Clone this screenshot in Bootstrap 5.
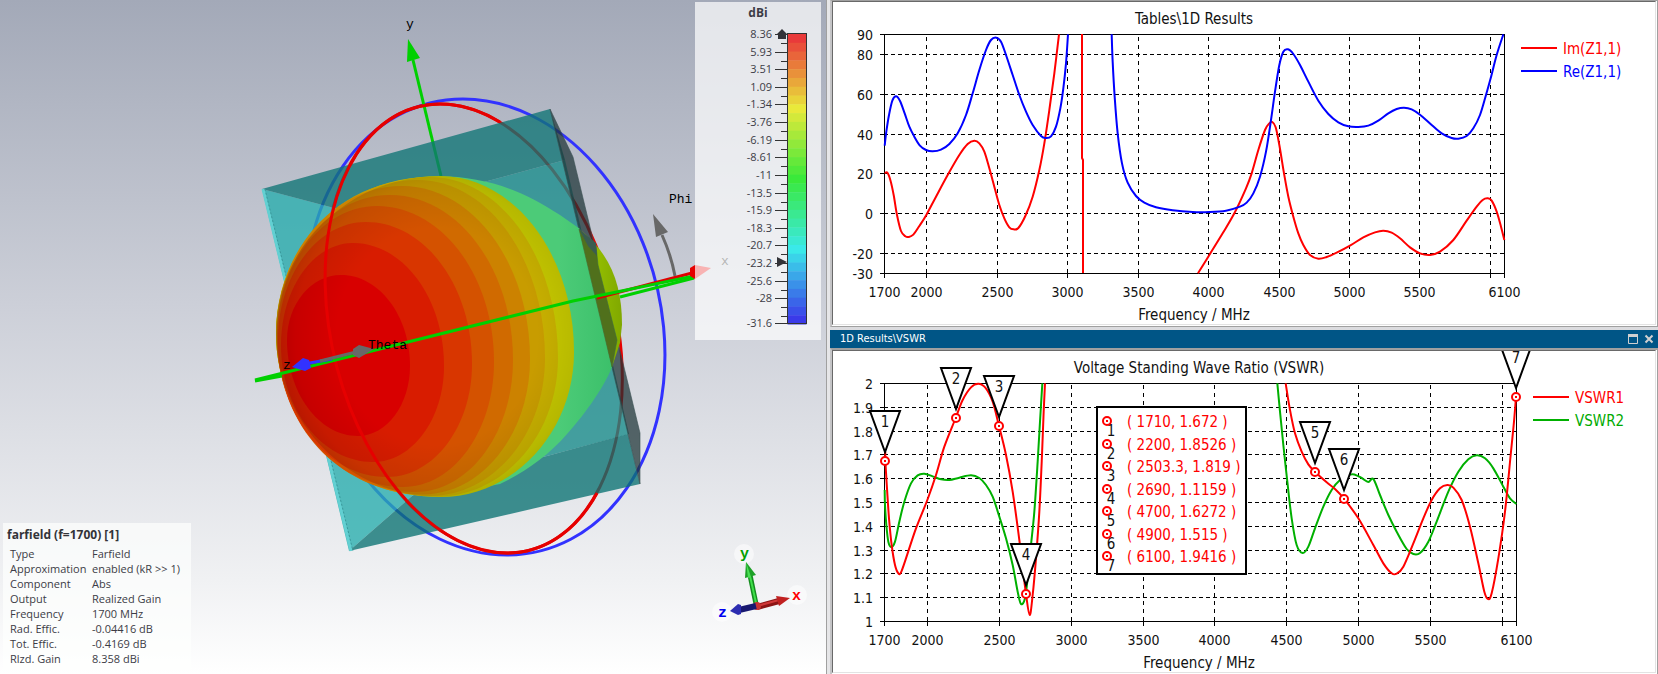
<!DOCTYPE html>
<html lang="en">
<head>
<meta charset="utf-8">
<meta name="viewport" content="width=device-width, initial-scale=1">
<title>Farfield and 1D Results</title>
<link href="https://cdn.jsdelivr.net/npm/bootstrap@5.3.0/dist/css/bootstrap.min.css" rel="stylesheet">
<style>
body{font-family:"Open Sans","Noto Sans",sans-serif;background:#dcdcdf;color:#3c3c46}
.view3d{flex:826 1 0;min-width:0;background:linear-gradient(#a3a9b8,#cccfd8 45%,#f0f1f3 86%,#fff)}
.results{flex:832 1 0;min-width:0}
.splitter{width:4px;background:#e6e6e8;border-left:1px solid #a0a0a0}
.pane{background:#fff;border-top:1px solid #a0a0a0;border-left:2px solid #c4c4c6;border-right:1px solid #a0a0a0;padding-right:1px;min-height:0}
.pane-top{flex:327 1 0;border-bottom:1px solid #a0a0a0;padding-bottom:1px}
.pane-bottom{flex:326 1 0;border-top:2px solid #a0a0a0;padding-bottom:1px}
.plot{border:1px solid #696969;border-right-color:#e3e3e3;border-bottom-color:#e3e3e3;min-height:0}
.titlebar{height:18px;margin-top:3px;padding:0 3px 0 10px;background:#005586;color:#fff;font:11px/18px "DejaVu Sans Condensed","DejaVu Sans",sans-serif}
.titlebar button{width:12px;height:18px;padding:0;border:0;background:none;line-height:0}
.fill{display:block;width:100%;height:100%}
.ramp{top:2px;right:5px;width:126px;height:338px;background:rgba(255,255,255,.7)}
.info{left:3px;bottom:4px;width:188px;padding:4px;background:rgba(253,255,253,.7)}
.info table{width:100%;color:#3c3c46;font-size:11px;line-height:15px}
.info caption{caption-side:top;padding:0 0 3px;color:#333338;font-size:12px;font-weight:700;line-height:16px}
.info th{width:85px;padding:0 0 0 3px;font-weight:400}
.info td{padding:0}
.plot text{font:15px "DejaVu Sans Condensed","DejaVu Sans",sans-serif;fill:#111}
.plot text.tick{font-size:14px}
.ramp text{font:11px "Open Sans","Noto Sans",sans-serif;fill:#3c3c46}
.ramp text.unit{font-size:12px;font-weight:700}
.scene text{font:13px "Liberation Mono",monospace}
.scene .triad text{font-size:15px;font-weight:700}
.plot .red{fill:#f00}.plot .blue{fill:#00f}.plot .green{fill:#00aa00}
</style>
</head>
<body>
<div class="d-flex vh-100 overflow-hidden">
<main class="view3d position-relative">
<svg class="fill scene" viewBox="0 0 826 674" role="img" aria-label="Farfield pattern">
<defs>
<radialGradient id="shade" cx=".54" cy=".5" r=".56"><stop offset=".6" stop-opacity="0"/><stop offset=".85" stop-opacity=".08"/><stop offset="1" stop-opacity=".2"/></radialGradient>
<linearGradient id="grn" x2="1" y2="0"><stop offset=".7" stop-color="#4ccb78"/><stop offset="1" stop-color="#3cc06a"/></linearGradient>
<linearGradient id="lobe" x2="1" y2="0"><stop offset=".5" stop-color="#90ba00"/><stop offset="1" stop-color="#80a800"/></linearGradient>
</defs>
<g fill="none" stroke-width="3">
<path d="M-1 0A1 1 0 1 1 1 0A1 1 0 1 1-1 0" transform="matrix(178.6 0 22 228 485 327)" vector-effect="non-scaling-stroke" stroke="#3232ff"/>
<path d="M-1 0A1 1 0 1 1 1 0A1 1 0 1 1-1 0" transform="matrix(145 0 33.5 224.5 473.5 328.5)" vector-effect="non-scaling-stroke" stroke="#e60000"/>
<path d="M441 176L413 60" stroke="#00d000"/>
</g>
<path d="M408 39L407 62L420 58Z" fill="#00d000"/>
<g fill-opacity=".78">
<path fill="#178c8b" d="M484 182L565 160L629 434L547 456L440 480V194Z"/>
<path fill="#26adad" d="M262 189L334 208L440 215L440 480L412 496L349 551Z"/>
<path fill="#107474" d="M262 189L550 109L565 160L484 182L440 194L440 215L334 208Z"/>
<path fill="#0a7272" d="M349 551L412 496L440 480L547 456L628 434L640 484Z"/>
</g>
<path d="M263 189L351 551" stroke="#62d0d2" stroke-width="3"/>
<path d="M263 189L351 551" stroke="#3a9a9c" stroke-dasharray="2 2" transform="translate(2 0)"/>
<path fill="#1c3234" fill-opacity=".72" stroke="#3a5052" stroke-opacity=".6" d="M550 109L573 157L640 433L640 484Z"/>
<path fill="url(#grn)" d="M438 176C487 177 522 190 560 215L580 229L612 367C603 390 580 420 567 434C548 456 525 472 500 484L438 496Z"/>
<path fill="url(#lobe)" d="M579 229C611 254 622 285 622 325L620 343L612 367Z"/>
<path fill="#50701c" stroke="#3e6a40" stroke-opacity=".6" d="M579 229L596 246L598 265L617 340L612 367Z"/>
<path fill="#3a5c50" d="M579 229L596 243L597 256L588 246Z"/>
<g id="bands"></g>
<g fill="none" stroke-width="3">
<path d="M.395-.92A1 1 0 1 0 .683.733" transform="matrix(145 0 33.5 224.5 473.5 328.5)" vector-effect="non-scaling-stroke" stroke="#e60000"/>
<path d="M694 278L620 297M282 376L255 381" stroke="#00d000"/>
<path d="M597 298L692 273" stroke="#e00000"/>
<path d="M694 276L573 301L255 380" stroke="#00d000"/>
<path d="M304 364L332 359" stroke="#3232ff"/>
<path d="M320 361L356 352M675 276Q671 255 662 235" stroke="#686868"/>
</g>
<path fill="#e60000" d="M690 268L695 265L711 268L695 279L690 276Z"/>
<path fill="#3232ff" d="M292 367L303 358L309 360L311 368L305 371Z"/>
<path fill="#686868" d="M353 349L359 345L374 349L359 358L353 355ZM653 214L656 237L668 232Z"/>
<text x="406" y="28">y</text><text x="669" y="203">Phi</text><text x="368" y="349">Theta</text><text x="283" y="369">z</text><text x="721" y="265">x</text>
<g class="triad">
<g fill="#fff" fill-opacity=".5"><circle cx="744" cy="554" r="10"/><circle cx="797" cy="595" r="10"/><circle cx="722" cy="612" r="10"/></g>
<path d="M756 604L750 575" stroke="#148c1e" stroke-width="5"/><path d="M756 603L750 576" stroke="#3fe04a" stroke-width="2"/>
<path d="M746 562L745 578L756 575Z" fill="#1ea028"/><path d="M746 562L748 578L751 577Z" fill="#4ae054"/>
<path d="M757 607L779 601" stroke="#8c1414" stroke-width="6"/><path d="M757 606L779 600" stroke="#d03838" stroke-width="2"/>
<path d="M776 596L790 598L779 606Z" fill="#c02020"/><circle cx="757" cy="606" r="4" fill="#c83232"/>
<path d="M756 606L739 610" stroke="#181870" stroke-width="6"/><path d="M730 611L738 604L741 605L741 614L738 615Z" fill="#2c2cb0"/>
<text x="740" y="558" fill="#00a000">y</text><text x="792" y="600" fill="#f00">x</text><text x="718" y="617" fill="#0000f0">z</text></g>
</svg>
<div class="ramp position-absolute"><svg class="fill" viewBox="695 2 126 338" id="ramp" role="img" aria-label="Gain scale in dBi"></svg></div>
<div class="info position-absolute"><table>
<caption>farfield (f=1700) [1]</caption>
<tbody>
<tr><th scope="row">Type</th><td>Farfield</td></tr>
<tr><th scope="row">Approximation</th><td>enabled (kR &gt;&gt; 1)</td></tr>
<tr><th scope="row">Component</th><td>Abs</td></tr>
<tr><th scope="row">Output</th><td>Realized Gain</td></tr>
<tr><th scope="row">Frequency</th><td>1700 MHz</td></tr>
<tr><th scope="row">Rad. Effic.</th><td>-0.04416 dB</td></tr>
<tr><th scope="row">Tot. Effic.</th><td>-0.4169 dB</td></tr>
<tr><th scope="row">Rlzd. Gain</th><td>8.358 dBi</td></tr>
</tbody></table></div>
</main>
<section class="results d-flex">
<div class="splitter flex-shrink-0"></div>
<div class="d-flex flex-column flex-grow-1">
<div class="pane pane-top d-flex"><div class="plot flex-grow-1"><svg class="fill" viewBox="833 2 822 322" id="zchart" role="img" aria-label="Impedance chart"></svg></div></div>
<header class="titlebar d-flex align-items-center flex-shrink-0"><span class="me-auto">1D Results\VSWR</span>
<div class="d-flex gap-1">
<button type="button" aria-label="Maximize"><svg width="12" height="12" viewBox="0 0 12 12"><path d="M1.500 2.500H10.500V10.500H1.500Z" fill="none" stroke="#d0d0d0"/><path d="M1 1H11V4H1Z" fill="#d0d0d0"/></svg></button>
<button type="button" aria-label="Close"><svg width="12" height="12" viewBox="0 0 12 12"><path d="M2.500 2.500L9.500 9.500M9.500 2.500L2.500 9.500" stroke="#d0d0d0" stroke-width="2"/></svg></button>
</div></header>
<div class="pane pane-bottom d-flex"><div class="plot flex-grow-1"><svg class="fill" viewBox="833 351 822 321" id="vchart" role="img" aria-label="VSWR chart"></svg></div></div>
</div>
</section>
</div>
<script src="https://cdn.jsdelivr.net/npm/bootstrap@5.3.0/dist/js/bootstrap.bundle.min.js"></script>
<script>
const $ = id => document.getElementById(id);
const text = (x, y, s, a = 'start', c = '') => `<text x="${x}" y="${y}" text-anchor="${a}" class="${c}">${s}</text>`;

// Farfield contour bands: left, its y, right, its y, top, its x, bottom, its x, colour
const bands = [
 [276,333,574,352,176,440,497,440,'#c6c800'],
 [276,333,558,358,177,430,496.500,437,'#c8b000'],
 [276,333,545,358,180,418,496,430,'#c89c00'],
 [276.500,334,530,359,186,402,494.500,423,'#cc8200'],
 [277,336,513,360,195,390,492,415,'#d06a00'],
 [277,337,494,362,206,377,487,403,'#d45200'],
 [278,340,472,364,222,366,477,387,'#d83600'],
 [281,345,444,366,243,353,462,373,'#d81c00'],
 [287,340,410,366,275,341,436,358,'#d80000']];
const K = .552, blob = b => { const [L,yl,R,yr,T,xt,B,xb] = b;
 return `M${xt} ${T}C${xt+K*(R-xt)} ${T} ${R} ${yr-K*(yr-T)} ${R} ${yr}C${R} ${yr+K*(B-yr)} ${xb+K*(R-xb)} ${B} ${xb} ${B}C${xb-K*(xb-L)} ${B} ${L} ${yl+K*(B-yl)} ${L} ${yl}C${L} ${yl-K*(yl-T)} ${xt-K*(xt-L)} ${T} ${xt} ${T}Z`; };
$('bands').innerHTML = bands.map(b => `<path d="${blob(b)}" fill="${b[8]}"/>`).join('') + `<path d="${blob(bands[0])}" fill="url(#shade)"/>`;

// Colour ramp
const gains = ['8.36','5.93','3.51','1.09','-1.34','-3.76','-6.19','-8.61','-11','-13.5','-15.9','-18.3','-20.7','-23.2','-25.6','-28','-31.6'];
let r = text(758, 17, 'dBi', 'middle', 'unit');
for (let i = 0; i < 33; i++) r += `<rect x="787.5" y="${34+i*8.79}" width="19" height="9.200" fill="hsl(${i*7.5},80%,57%)"/>`;
r += '<rect x="787.5" y="33.5" width="19" height="290" fill="none" stroke="#333"/>';
gains.forEach((g, i) => { const y = i < 16 ? Math.round(34 + i*17.62) : 323; r += text(772, y+4, g, 'end') + `<path stroke="#333" d="M775 ${y+.5}h12"/>`; });
for (let i = 0; i < 16; i++) r += `<path stroke="#333" d="M781 ${Math.round(43 + i*17.62)+.5}h6"/>`;
r += '<path stroke="#333" d="M781 316.500h6"/><path fill="#333338" d="M782 29L788 35H786V39H778V35H776ZM777 257L787 262L777 267Z"/>';
$('ramp').innerHTML = r;

// Smooth curve through points given in thirds of a unit from the frame's left edge
function curve(p, ox, oy, color, dx = 0) {
 const q = []; for (let i = 0; i < p.length; i += 2) q.push([ox + (p[i]+dx)/3, oy + p[i+1]/3]);
 let d = 'M' + q[0];
 for (let i = 0; i < q.length-1; i++) { const a = q[i-1]||q[i], b = q[i], c = q[i+1], e = q[i+2]||c;
  d += `C${b[0]+(c[0]-a[0])/6} ${b[1]+(c[1]-a[1])/6} ${c[0]-(e[0]-b[0])/6} ${c[1]-(e[1]-b[1])/6} ${c[0]} ${c[1]}`; }
 return `<path d="${d}" fill="none" stroke="${color}" stroke-width="2"/>`;
}
function axes(x0, x1, y0, y1, min, max, ys) {
 let s = '';
 const Y = v => Math.round(y1 - (v-min)/(max-min)*(y1-y0)) + .5, X = v => Math.round(x0 + (v-1700)/4400*(x1-x0)) + .5;
 ys.forEach(v => { const y = Y(v); s += text(873, y+5, v, 'end', 'tick') + `<path stroke="#000" d="M${x0-4} ${y}h4"/>`;
  if (v !== min && v !== max) s += `<path stroke="#000" stroke-dasharray="4 3" d="M${x0} ${y}H${x1}"/>`; });
 [1700,2000,2500,3000,3500,4000,4500,5000,5500,6000,6100].forEach(v => { const x = X(v);
  if (v !== 6000) s += text(x, y1+24, v, 'middle', 'tick');
  s += `<path stroke="#000" d="M${x} ${y1}v5"/>`;
  if (v !== 1700 && v !== 6100) s += `<path stroke="#000" stroke-dasharray="4 4" d="M${x} ${y1}V${y0}"/>`; });
 return s + `<rect x="${x0+.5}" y="${y0+.5}" width="${x1-x0}" height="${y1-y0}" fill="none" stroke="#000"/>`;
}
const R = '#f00', B = '#00f', G = '#00b000';
$('zchart').innerHTML = text(1194, 24, 'Tables\\1D Results', 'middle') + text(1194, 320, 'Frequency / MHz', 'middle')
 + axes(884, 1504, 34, 273, -30, 90, [90,80,60,40,20,0,-20,-30])
 + curve([176,520,184,518,193,540,203,585,213,645,225,693,238,709,248,711,262,704,280,678,301,645,330,590,365,525,400,465,425,432,445,422,460,430,475,455,490,505,505,560,520,615,535,655,550,682,563,688,577,684,598,648,620,590,640,510,655,430,670,330,685,220,699,103], 826, 0, R)
 + `<path fill="none" stroke="${R}" stroke-width="2" d="M1082 34V158L1083 160V273"/>`
 + curve([1116,820,1150,765,1190,700,1225,640,1260,565,1277,520,1297,450,1317,390,1330,370,1339,366,1349,382,1360,435,1374,520,1387,590,1402,650,1417,700,1432,735,1452,765,1477,776,1502,771,1532,758,1572,737,1612,712,1647,697,1672,692,1697,698,1722,715,1752,742,1782,760,1812,765,1842,755,1882,720,1922,662,1952,620,1970,600,1985,595,1997,602,2012,635,2025,680,2035,720], 826, 0, R)
 + curve([176,437,181,395,189,345,199,302,210,289,222,303,236,340,250,380,265,410,281,436,300,450,320,454,345,449,370,432,395,400,420,345,440,280,460,210,480,150,495,120,511,113,525,125,540,165,560,225,580,285,600,335,620,375,645,408,660,414,675,409,690,380,703,325,712,265,720,190,726,103], 826, 0, B)
 + curve([857,103,860,185,866,290,875,400,888,490,905,548,930,588,955,608,990,622,1040,631,1100,636,1150,636,1200,632,1242,620,1262,608,1282,580,1302,530,1320,455,1335,360,1347,275,1360,195,1372,155,1386,148,1402,162,1422,195,1447,245,1477,302,1507,342,1537,367,1567,379,1597,381,1627,377,1657,362,1687,340,1712,327,1734,323,1757,328,1782,344,1817,375,1847,400,1877,414,1897,416,1922,408,1942,385,1962,345,1980,285,1994,235,2012,165,2032,103], 826, 0, B)
 + `<path stroke="${R}" stroke-width="2" d="M1521 48h36"/><path stroke="${B}" stroke-width="2" d="M1521 71h36"/>`
 + text(1563, 54, 'Im(Z1,1)', 'start', 'red') + text(1563, 77, 'Re(Z1,1)', 'start', 'blue');

const dot = (x, y) => `<circle cx="${x}" cy="${y}" r="4" fill="#fff" stroke="#f00" stroke-width="2"/><rect x="${x-1}" y="${y-1}" width="2" height="2" fill="#f00"/>`;
const marks = [[885,461],[956,418],[999,426],[1026,594],[1315,472],[1344,499],[1516,397]];
const list = ['1710, 1.672','2200, 1.8526','2503.3, 1.819','2690, 1.1159','4700, 1.6272','4900, 1.515','6100, 1.9416'];
let v = text(1199, 373, 'Voltage Standing Wave Ratio (VSWR)', 'middle') + text(1199, 668, 'Frequency / MHz', 'middle')
 + axes(884, 1516, 383, 621, 1, 2, [2,1.9,1.8,1.7,1.6,1.5,1.4,1.3,1.2,1.1,1])
 + curve([176,435,177,480,181,540,187,590,196,606,207,590,220,530,235,470,255,415,275,391,295,386,320,394,345,403,370,405,400,398,435,391,460,399,480,420,500,455,520,515,540,580,560,660,575,740,585,777,597,760,606,690,615,600,625,500,635,350,642,230,649,115], 826, 345, G)
 + curve([112,115,120,200,130,300,142,410,155,520,170,600,188,624,205,605,225,550,250,485,275,435,300,405,330,389,345,389,365,399,385,411,400,402,420,450,445,510,470,560,500,612,520,627,540,624,565,590,590,530,625,440,655,380,685,343,710,331,735,340,760,370,790,425,810,460,829,477], 826, 345, G, 1242)
 + curve([178,320,178,347,183,430,189,520,197,600,207,660,217,685,225,682,240,640,270,550,304,465,330,390,355,305,389,219,410,165,435,127,457,116,478,128,500,170,519,243,540,330,560,440,580,585,600,747,611,810,620,750,630,640,640,500,648,330,653,200,657,115], 826, 345, R)
 + curve([137,115,150,195,165,265,185,320,205,358,225,380,260,412,285,432,312,461,355,520,400,600,430,655,455,685,470,686,490,665,520,595,550,520,575,465,600,430,622,420,640,428,665,465,690,545,715,655,733,740,744,762,755,745,775,640,795,500,812,330,822,230,828,155], 826, 345, R, 1242);
marks.forEach(([x, y], i) => { v += `<path d="M${x} ${y-9}L${x-15} ${y-50}H${x+15}Z" fill="#fff" stroke="#000" stroke-width="2"/>` + text(x, y-34, i+1, 'middle') + dot(x, y); });
v += '<rect x="1097" y="407" width="149" height="167" fill="#fff" stroke="#000" stroke-width="2"/>';
list.forEach((t, i) => { const y = Math.round(421 + i*22.5); v += text(1111, y+15, i+1, 'middle') + dot(1107, y) + text(1127, y+6, `( ${t} )`, 'start', 'red'); });
v += `<path stroke="${R}" stroke-width="2" d="M1533 397h36"/><path stroke="${G}" stroke-width="2" d="M1533 420h36"/>`
 + text(1575, 403, 'VSWR1', 'start', 'red') + text(1575, 426, 'VSWR2', 'start', 'green');
$('vchart').innerHTML = v;
</script>
</body>
</html>
